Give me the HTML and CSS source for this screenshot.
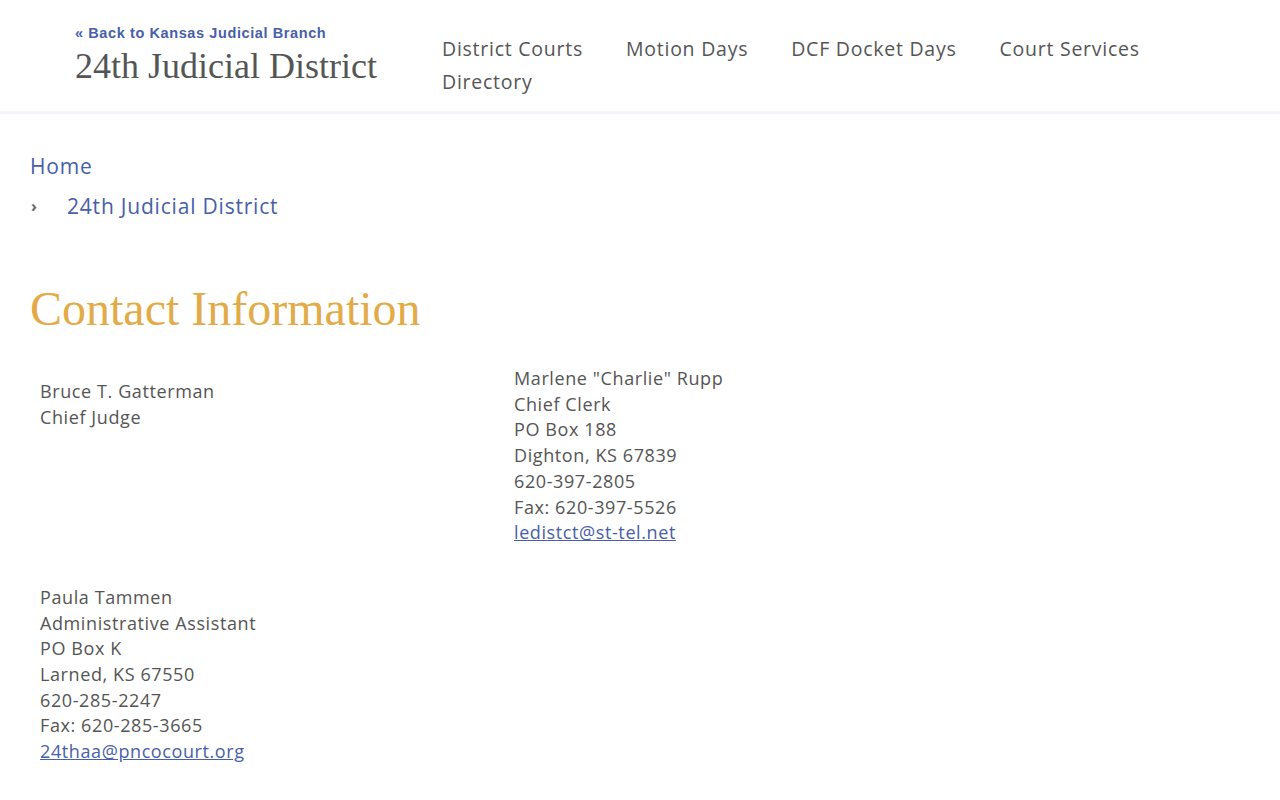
FILE: index.html
```html
<!DOCTYPE html>
<html lang="en">
<head>
<meta charset="utf-8">
<title>24th Judicial District</title>
<link rel="stylesheet" href="styles.css">
</head>
<body>
<header class="site-header">
  <div class="brand">
    <a class="back-link" href="#">« Back to Kansas Judicial Branch</a>
    <div class="site-title">24th Judicial District</div>
  </div>
  <nav class="main-nav">
    <a href="#">District Courts</a>
    <a href="#">Motion Days</a>
    <a href="#">DCF Docket Days</a>
    <a href="#">Court Services</a>
    <a href="#">Directory</a>
  </nav>
</header>
<main class="content">
  <ol class="breadcrumb">
    <li><a href="#">Home</a></li>
    <li class="crumb-sub"><span class="chev">›</span><a href="#">24th Judicial District</a></li>
  </ol>
  <h1 class="page-title">Contact Information</h1>
  <div class="contacts">
    <div class="contact contact-judge">
      Bruce T. Gatterman<br>
      Chief Judge
    </div>
    <div class="contact">
      Marlene "Charlie" Rupp<br>
      Chief Clerk<br>
      PO Box 188<br>
      Dighton, KS 67839<br>
      620-397-2805<br>
      Fax: 620-397-5526<br>
      <a href="#">ledistct@st-tel.net</a>
    </div>
    <div class="contact">
      Paula Tammen<br>
      Administrative Assistant<br>
      PO Box K<br>
      Larned, KS 67550<br>
      620-285-2247<br>
      Fax: 620-285-3665<br>
      <a href="#">24thaa@pncocourt.org</a>
    </div>
  </div>
</main>
</body>
</html>
```
FILE: styles.css
```css
html, body {
  margin: 0;
  padding: 0;
  background: #ffffff;
}
body {
  font-family: "Open Sans", "Liberation Sans", sans-serif;
  color: #555555;
}
a {
  color: #4760a8;
  text-decoration: none;
}
.site-header {
  display: flex;
  align-items: flex-start;
  padding: 24px 0 0 75px;
  height: 87px;
  border-bottom: 3px solid #f2f6fc;
}
.brand {
  display: flex;
  flex-direction: column;
  width: 367px;
  flex: none;
}
.back-link {
  font-family: "Liberation Sans", sans-serif;
  font-weight: bold;
  font-size: 14.5px;
  letter-spacing: 0.6px;
  line-height: 18px;
  color: #4760a8;
}
.site-title {
  font-family: "Liberation Serif", serif;
  font-size: 36px;
  line-height: 32px;
  color: #555555;
  margin-top: 8px;
}
.main-nav {
  display: flex;
  flex-wrap: wrap;
  column-gap: 43px;
  width: 740px;
  padding-top: 8px;
}
.main-nav a {
  color: #555555;
  font-size: 19.5px;
  letter-spacing: 0.75px;
  line-height: 33px;
}
.content {
  padding: 32px 30px 40px;
}
.breadcrumb {
  list-style: none;
  margin: 0;
  padding: 0;
  font-size: 21px;
  letter-spacing: 0.8px;
  line-height: 40px;
}
.crumb-sub {
  display: flex;
  align-items: center;
}
.chev {
  width: 36px;
  color: #666666;
  font-size: 16px;
  font-weight: bold;
  padding-left: 1px;
}
.page-title {
  font-family: "Liberation Serif", serif;
  font-weight: normal;
  font-size: 48px;
  line-height: 56px;
  color: #e3ab48;
  margin: 55px 0 0;
}
.contacts {
  display: grid;
  grid-template-columns: 474px 474px;
  row-gap: 39px;
  padding: 29px 10px 0;
  font-size: 18px;
  letter-spacing: 0.6px;
  line-height: 25.7px;
}
.contact a {
  text-decoration: underline;
}
.contact-judge {
  padding-top: 13px;
}
```
